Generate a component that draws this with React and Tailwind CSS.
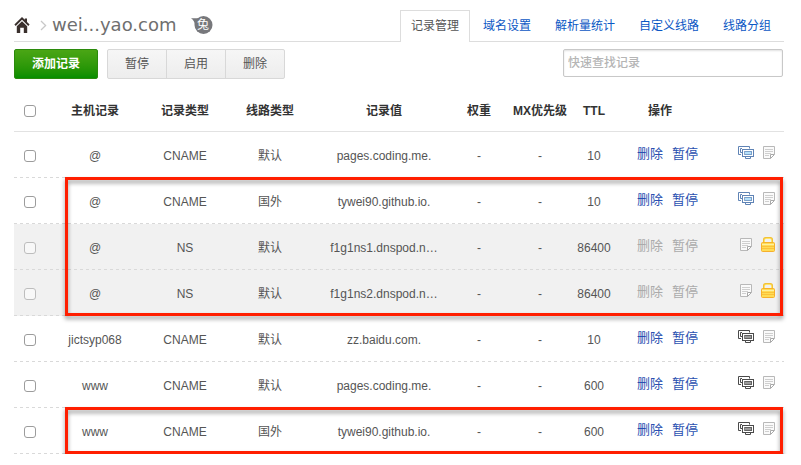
import React from "react";

const TABS = ["记录管理", "域名设置", "解析量统计", "自定义线路", "线路分组"];

const RECORDS = [
  { host: "@", type: "CNAME", line: "默认", value: "pages.coding.me.", ttl: "10", tone: "blue" },
  { host: "@", type: "CNAME", line: "国外", value: "tywei90.github.io.", ttl: "10", tone: "blue" },
  { host: "@", type: "NS", line: "默认", value: "f1g1ns1.dnspod.n…", ttl: "86400", locked: true },
  { host: "@", type: "NS", line: "默认", value: "f1g1ns2.dnspod.n…", ttl: "86400", locked: true },
  { host: "jictsyp068", type: "CNAME", line: "默认", value: "zz.baidu.com.", ttl: "10", tone: "dark" },
  { host: "www", type: "CNAME", line: "默认", value: "pages.coding.me.", ttl: "600", tone: "dark" },
  { host: "www", type: "CNAME", line: "国外", value: "tywei90.github.io.", ttl: "600", tone: "dark" },
];

function HomeIcon() {
  return (
    <svg width="16" height="17" viewBox="0 0 16 17" fill="#3a302d" aria-hidden="true">
      <path d="M8 0 L10.8 2.7 V1.6 H13 V4.9 L15.6 7.5 L14.3 8.9 L8 2.8 L1.7 8.9 L0.4 7.5 Z" />
      <path d="M8 4.3 L13.2 9.2 V16 H9.8 V10.8 H6.2 V16 H2.8 V9.2 Z" />
    </svg>
  );
}

function ChevronIcon() {
  return (
    <svg width="7" height="11" viewBox="0 0 7 11" fill="none" stroke="#c8c8c8" strokeWidth="1.3" aria-hidden="true">
      <path d="M1 1 L5.6 5.5 L1 10" />
    </svg>
  );
}

function FreeBadge() {
  return (
    <span className="relative flex h-[18px] w-[22px] items-center justify-end">
      <svg className="absolute inset-0" width="22" height="18" viewBox="0 0 22 18" fill="#77787c" aria-hidden="true">
        <circle cx="12.5" cy="9" r="9" />
        <path d="M0 2.2 H9 L4 9 Q3.6 4.6 0 2.2 Z" />
      </svg>
      <span className="relative w-[19px] text-center text-[12px] leading-[18px] text-white">兔</span>
    </span>
  );
}

function MonitorsIcon({ tone }) {
  const stroke = tone === "blue" ? "#5f83b5" : "#4a4a4a";
  const fill = tone === "blue" ? "#b4e0fa" : "#9a9a9a";
  return (
    <svg width="16" height="13" viewBox="0 0 16 13" fill="none" stroke={stroke} aria-hidden="true">
      <path d="M3 8.5 H0.5 V0.5 H11.5 V2.5" />
      <path d="M4 6.5 H2.5 V2.5 H4" />
      <rect x="4.5" y="3.5" width="11" height="7" fill="#fff" />
      <rect x="7" y="5" width="7" height="4" fill={fill} stroke="none" />
      <rect x="6.5" y="5.5" width="7" height="3" strokeOpacity="0.7" />
      <path d="M7.5 11 V12.5 H12.5 V11" fill="#fff" />
    </svg>
  );
}

function NoteIcon() {
  return (
    <svg width="12" height="13" viewBox="0 0 12 13" fill="none" stroke="#b8b8b8" aria-hidden="true">
      <path d="M7.5 12.5 H0.5 V0.5 H11.5 V8" fill="#fafafa" />
      <path d="M2 3.5 H10 M2 5.5 H10 M2 7.5 H8 M2 9.5 H6" stroke="#cfcfcf" />
      <path d="M7.5 12.5 V8.5 H11.5 Z" fill="#fff" stroke="#a9a9a9" />
    </svg>
  );
}

function LockIcon() {
  return (
    <svg width="14" height="15" viewBox="0 0 14 15" fill="none" aria-hidden="true">
      <path d="M3 6 V2.5 Q3 1 4.5 1 H9.5 Q11 1 11 2.5 V6" stroke="#f3c136" strokeWidth="2" />
      <path d="M3.5 6 V2.6 Q3.5 1.5 4.6 1.5 H9.4 Q10.5 1.5 10.5 2.6 V6" stroke="#ffe566" />
      <rect x="0.5" y="5.5" width="13" height="9" rx="1" fill="#ffdc55" stroke="#f6b02c" />
      <path d="M1 7.5 H13" stroke="#fff0a0" />
      <path d="M1 9.5 H13 M1 11.5 H13" stroke="#fcc23a" />
    </svg>
  );
}

function Checkbox({ label, disabled }) {
  return (
    <input
      type="checkbox"
      aria-label={label}
      disabled={disabled}
      className="mx-auto block size-3 appearance-none rounded-[3px] border border-[#9c9c9c] bg-white checked:bg-[#1f5fc4] disabled:border-[#bdbdbd] disabled:bg-[#f8f8f8]"
    />
  );
}

function RecordRow({ record }) {
  const { host, type, line, value, ttl, tone, locked } = record;
  const link = locked ? "text-[#aaa]" : "text-[#2a4fb0] hover:underline";
  return (
    <tr
      className={`h-[46px] bg-[linear-gradient(90deg,#d9d9d9_50%,transparent_50%)] bg-[length:6px_1px] bg-bottom-left bg-repeat-x ${
        locked ? "bg-[#f1f1f1]" : ""
      }`}
    >
      <td className="pt-0.5"><Checkbox label={`${host} ${value}`} disabled={locked} /></td>
      <td className="pt-0.5">{host}</td>
      <td className="pt-0.5">{type}</td>
      <td className="pt-0.5">{line}</td>
      <td className="truncate pt-0.5">{value}</td>
      <td className="pt-0.5">-</td>
      <td className="pt-0.5">-</td>
      <td className="pt-0.5">{ttl}</td>
      <td className="pb-0.5">
        <div className="flex gap-[9px] pl-[25px] text-[13px]">
          <a href="#delete" className={link}>删除</a>
          <a href="#pause" className={link}>暂停</a>
        </div>
      </td>
      <td className="pb-1.5">
        <div className="flex items-center justify-end gap-[9px] pr-[9px]">
          {locked ? (
            <>
              <NoteIcon />
              <LockIcon />
            </>
          ) : (
            <>
              <MonitorsIcon tone={tone} />
              <NoteIcon />
            </>
          )}
        </div>
      </td>
    </tr>
  );
}

export default function App() {
  return (
    <div className="bg-white pl-[14px] pr-[17px] font-['Liberation_Sans','Noto_Sans_CJK_SC',sans-serif] text-[12px] text-[#555]">
      <header className="flex justify-between border-b border-[#ddd] pt-[10px]">
        <div className="flex items-center pb-px">
          <a href="#home" aria-label="首页"><HomeIcon /></a>
          <span className="ml-[10px] mr-[5px]"><ChevronIcon /></span>
          <h1 className="mr-[14px] font-['Century_Gothic','DejaVu_Sans',sans-serif] text-[18px] leading-6 text-[#6f6f6f]">wei...yao.com</h1>
          <FreeBadge />
        </div>
        <nav className="-mb-px flex pr-px">
          {TABS.map((tab, i) =>
            i === 0 ? (
              <a key={tab} href="#tab" aria-current="page" className="mr-px h-8 border border-b-0 border-[#ddd] bg-white px-[10px] leading-[30px] text-[#555]">
                {tab}
              </a>
            ) : (
              <a key={tab} href="#tab" className="h-8 px-3 leading-8 text-[#0b57c4]">
                {tab}
              </a>
            )
          )}
        </nav>
      </header>

      <div className="flex items-start justify-between pr-px pt-[7px]">
        <div className="flex">
          <button type="button" className="mr-[9px] h-[30px] rounded-[2px] border border-[#2b8a0c] bg-linear-to-b from-[#4aa615] to-[#058e00] px-[17px] font-bold text-white">
            添加记录
          </button>
          <div className="flex h-[30px] divide-x divide-[#d8d8d8] rounded-[2px] border border-[#d8d8d8] bg-linear-to-b from-[#f6f6f6] to-[#ededed]">
            <button type="button" className="w-[59px]">暂停</button>
            <button type="button" className="w-[59px]">启用</button>
            <button type="button" className="w-[58px]">删除</button>
          </div>
        </div>
        <input
          type="search"
          aria-label="快速查找记录"
          placeholder="快速查找记录"
          className="h-7 w-[220px] rounded-[2px] border border-[#c8c8c8] px-1 shadow-[inset_0_1px_2px_rgba(0,0,0,0.12)] outline-none placeholder:font-medium placeholder:text-[#b5b5b5]"
        />
      </div>

      <div className="relative mt-[11px]">
        <table className="w-full table-fixed text-center leading-4">
          <colgroup>
            <col className="w-8" />
            <col className="w-[98px]" />
            <col className="w-[82px]" />
            <col className="w-[88px]" />
            <col />
            <col className="w-[50px]" />
            <col className="w-[72px]" />
            <col className="w-[36px]" />
            <col className="w-[96px]" />
            <col className="w-[76px]" />
          </colgroup>
          <thead>
            <tr className="h-[42px] bg-[linear-gradient(#e2e2e2,#e2e2e2)] bg-[length:100%_1px] bg-bottom-left bg-no-repeat text-[#333]">
              <th><Checkbox label="全选" /></th>
              <th>主机记录</th>
              <th>记录类型</th>
              <th>线路类型</th>
              <th>记录值</th>
              <th>权重</th>
              <th className="whitespace-nowrap">MX优先级</th>
              <th>TTL</th>
              <th>操作</th>
              <th aria-label="备注" />
            </tr>
          </thead>
          <tbody>
            {RECORDS.map((record, i) => (
              <RecordRow key={i} record={record} />
            ))}
          </tbody>
        </table>

        {/* Highlight frames over rows 2–4 and row 7 */}
        <div className="pointer-events-none absolute left-[51px] right-px top-[87px] h-[139px] border-3 border-[#ff1e00] drop-shadow-[0_3px_2px_rgba(0,0,0,0.4)]" />
        <div className="pointer-events-none absolute left-[51px] right-px top-[317px] h-[47px] border-3 border-[#ff1e00] drop-shadow-[0_3px_2px_rgba(0,0,0,0.4)]" />
      </div>
    </div>
  );
}
